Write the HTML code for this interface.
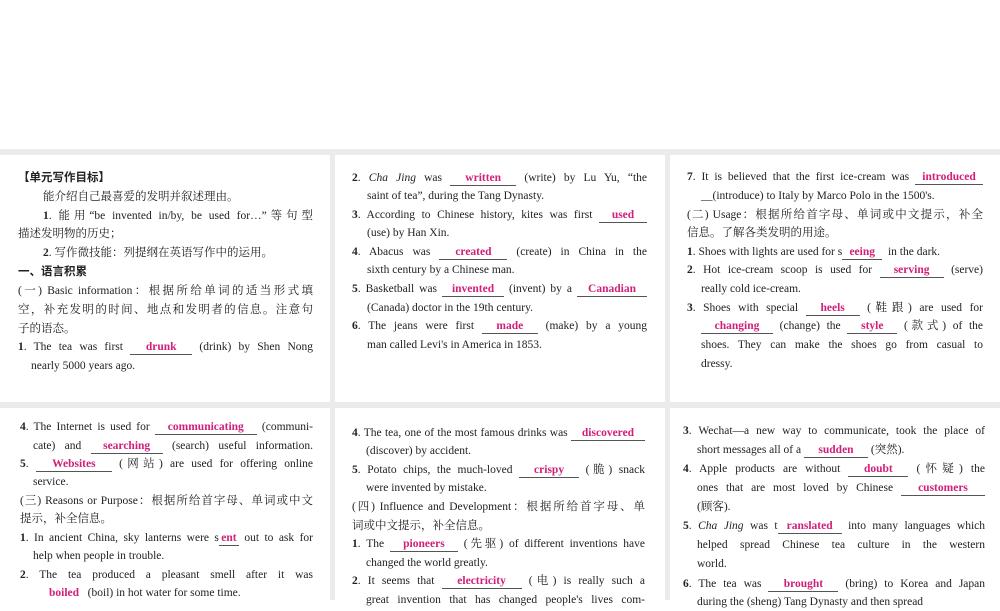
<!DOCTYPE html>
<html><head><meta charset="utf-8"><style>
*{margin:0;padding:0;box-sizing:border-box}
body{width:1000px;height:600px;overflow:hidden;background:#fff;position:relative;font-family:"Liberation Serif","Noto Serif CJK SC","Noto Sans CJK SC",serif;color:#222;font-size:11.5px}
.g{position:absolute;background:#ebebeb}
.l{position:absolute;height:18px;line-height:18px;white-space:nowrap}
.j{text-align:justify;text-align-last:justify}
.b{display:inline-block;border-bottom:1px solid #555;text-align:center;color:#d0207a;font-weight:bold;line-height:14px;height:15px;text-align-last:center}
.h{font-family:"Liberation Sans","Noto Sans CJK SC",sans-serif;font-weight:bold}
.n{font-weight:bold}
</style></head><body>
<div class="g" style="left:0;top:149px;width:1000px;height:6px"></div>
<div class="g" style="left:0;top:402px;width:1000px;height:6px"></div>
<div class="g" style="left:330px;top:149px;width:5px;height:451px"></div>
<div class="g" style="left:665px;top:149px;width:5px;height:451px"></div>

<!-- panel 1 -->
<div class="l h" style="left:18px;top:169px">【单元写作目标】</div>
<div class="l" style="left:43px;top:188px">能介绍自己最喜爱的发明并叙述理由。</div>
<div class="l j" style="left:43px;top:207px;width:270px"><span class="n">1</span>. 能用“be invented in/by, be used for…”等句型</div>
<div class="l" style="left:18px;top:225px">描述发明物的历史；</div>
<div class="l" style="left:43px;top:244px"><span class="n">2</span>. 写作微技能：列提纲在英语写作中的运用。</div>
<div class="l h" style="left:18px;top:263px">一、语言积累</div>
<div class="l j" style="left:18px;top:282px;width:295px">(一) Basic information：根据所给单词的适当形式填</div>
<div class="l j" style="left:18px;top:301px;width:295px">空，补充发明的时间、地点和发明者的信息。注意句</div>
<div class="l" style="left:18px;top:320px">子的语态。</div>
<div class="l j" style="left:18px;top:338px;width:295px"><span class="n">1</span>. The tea was first <span class="b" style="width:62px">drunk</span> (drink) by Shen Nong</div>
<div class="l" style="left:31px;top:357px">nearly 5000 years ago.</div>

<!-- panel 2 -->
<div class="l j" style="left:352px;top:169px;width:295px"><span class="n">2</span>. <i>Cha Jing</i> was <span class="b" style="width:66px">written</span> (write) by Lu Yu, “the</div>
<div class="l" style="left:367px;top:187px">saint of tea”, during the Tang Dynasty.</div>
<div class="l j" style="left:352px;top:206px;width:295px"><span class="n">3</span>. According to Chinese history, kites was first <span class="b" style="width:48px">used</span></div>
<div class="l" style="left:367px;top:224px">(use) by Han Xin.</div>
<div class="l j" style="left:352px;top:243px;width:295px"><span class="n">4</span>. Abacus was <span class="b" style="width:68px">created</span> (create) in China in the</div>
<div class="l" style="left:367px;top:261px">sixth century by a Chinese man.</div>
<div class="l j" style="left:352px;top:280px;width:295px"><span class="n">5</span>. Basketball was <span class="b" style="width:62px">invented</span> (invent) by a <span class="b" style="width:70px">Canadian</span></div>
<div class="l" style="left:367px;top:299px">(Canada) doctor in the 19th century.</div>
<div class="l j" style="left:352px;top:317px;width:295px"><span class="n">6</span>. The jeans were first <span class="b" style="width:56px">made</span> (make) by a young</div>
<div class="l" style="left:367px;top:336px">man called Levi's in America in 1853.</div>

<!-- panel 3 -->
<div class="l j" style="left:687px;top:168px;width:296px"><span class="n">7</span>. It is believed that the first ice-cream was <span class="b" style="width:68px">introduced</span></div>
<div class="l" style="left:701px;top:187px">__(introduce) to Italy by Marco Polo in the 1500's.</div>
<div class="l j" style="left:687px;top:206px;width:296px">(二) Usage：根据所给首字母、单词或中文提示，补全</div>
<div class="l" style="left:687px;top:224px">信息。了解各类发明的用途。</div>
<div class="l" style="left:687px;top:243px"><span class="n">1</span>. Shoes with lights are used for s<span class="b" style="width:40px">eeing</span> &nbsp;in the dark.</div>
<div class="l j" style="left:687px;top:261px;width:296px"><span class="n">2</span>. Hot ice-cream scoop is used for <span class="b" style="width:64px">serving</span> (serve)</div>
<div class="l" style="left:701px;top:280px">really cold ice-cream.</div>
<div class="l j" style="left:687px;top:299px;width:296px"><span class="n">3</span>. Shoes with special <span class="b" style="width:54px">heels</span> (鞋跟) are used for</div>
<div class="l j" style="left:701px;top:317px;width:282px"><span class="b" style="width:72px">changing</span> (change) the <span class="b" style="width:50px">style</span> (款式) of the</div>
<div class="l j" style="left:701px;top:336px;width:282px">shoes. They can make the shoes go from casual to</div>
<div class="l" style="left:701px;top:355px">dressy.</div>

<!-- panel 4 -->
<div class="l j" style="left:20px;top:418px;width:293px"><span class="n">4</span>. The Internet is used for <span class="b" style="width:102px">communicating</span> (communi-</div>
<div class="l j" style="left:33px;top:437px;width:280px">cate) and <span class="b" style="width:72px">searching</span> (search) useful information.</div>
<div class="l j" style="left:20px;top:455px;width:293px"><span class="n">5</span>. <span class="b" style="width:76px">Websites</span> (网站) are used for offering online</div>
<div class="l" style="left:33px;top:473px">service.</div>
<div class="l j" style="left:20px;top:492px;width:293px">(三) Reasons or Purpose：根据所给首字母、单词或中文</div>
<div class="l" style="left:20px;top:510px">提示，补全信息。</div>
<div class="l j" style="left:20px;top:529px;width:293px"><span class="n">1</span>. In ancient China, sky lanterns were s<span class="b" style="width:20px">ent</span> out to ask for</div>
<div class="l" style="left:33px;top:547px">help when people in trouble.</div>
<div class="l j" style="left:20px;top:566px;width:293px"><span class="n">2</span>. The tea produced a pleasant smell after it was</div>
<div class="l" style="left:49px;top:584px"><span style="color:#d0207a;font-weight:bold">boiled</span> &nbsp;&nbsp;(boil) in hot water for some time.</div>

<!-- panel 5 -->
<div class="l j" style="left:352px;top:424px;width:293px"><span class="n">4</span>. The tea, one of the most famous drinks was <span class="b" style="width:74px">discovered</span></div>
<div class="l" style="left:366px;top:442px">(discover) by accident.</div>
<div class="l j" style="left:352px;top:461px;width:293px"><span class="n">5</span>. Potato chips, the much-loved <span class="b" style="width:60px">crispy</span> (脆) snack</div>
<div class="l" style="left:366px;top:479px">were invented by mistake.</div>
<div class="l j" style="left:352px;top:498px;width:293px">(四) Influence and Development：根据所给首字母、单</div>
<div class="l" style="left:352px;top:517px">词或中文提示，补全信息。</div>
<div class="l j" style="left:352px;top:535px;width:293px"><span class="n">1</span>. The <span class="b" style="width:68px">pioneers</span> (先驱) of different inventions have</div>
<div class="l" style="left:366px;top:554px">changed the world greatly.</div>
<div class="l j" style="left:352px;top:572px;width:293px"><span class="n">2</span>. It seems that <span class="b" style="width:80px">electricity</span> (电) is really such a</div>
<div class="l j" style="left:366px;top:591px;width:279px">great invention that has changed people's lives com-</div>

<!-- panel 6 -->
<div class="l j" style="left:683px;top:422px;width:302px"><span class="n">3</span>. Wechat—a new way to communicate, took the place of</div>
<div class="l" style="left:697px;top:441px">short messages all of a <span class="b" style="width:64px">sudden</span> (突然).</div>
<div class="l j" style="left:683px;top:460px;width:302px"><span class="n">4</span>. Apple products are without <span class="b" style="width:60px">doubt</span> (怀疑) the</div>
<div class="l j" style="left:697px;top:479px;width:288px">ones that are most loved by Chinese <span class="b" style="width:84px">customers</span></div>
<div class="l" style="left:697px;top:498px">(顾客).</div>
<div class="l j" style="left:683px;top:517px;width:302px"><span class="n">5</span>. <i>Cha Jing</i> was t<span class="b" style="width:64px">ranslated</span> into many languages which</div>
<div class="l j" style="left:697px;top:536px;width:288px">helped spread Chinese tea culture in the western</div>
<div class="l" style="left:697px;top:555px">world.</div>
<div class="l j" style="left:683px;top:575px;width:302px"><span class="n">6</span>. The tea was <span class="b" style="width:70px">brought</span> (bring) to Korea and Japan</div>
<div class="l" style="left:697px;top:593px">during the (sheng) Tang Dynasty and then spread</div>
</body></html>
